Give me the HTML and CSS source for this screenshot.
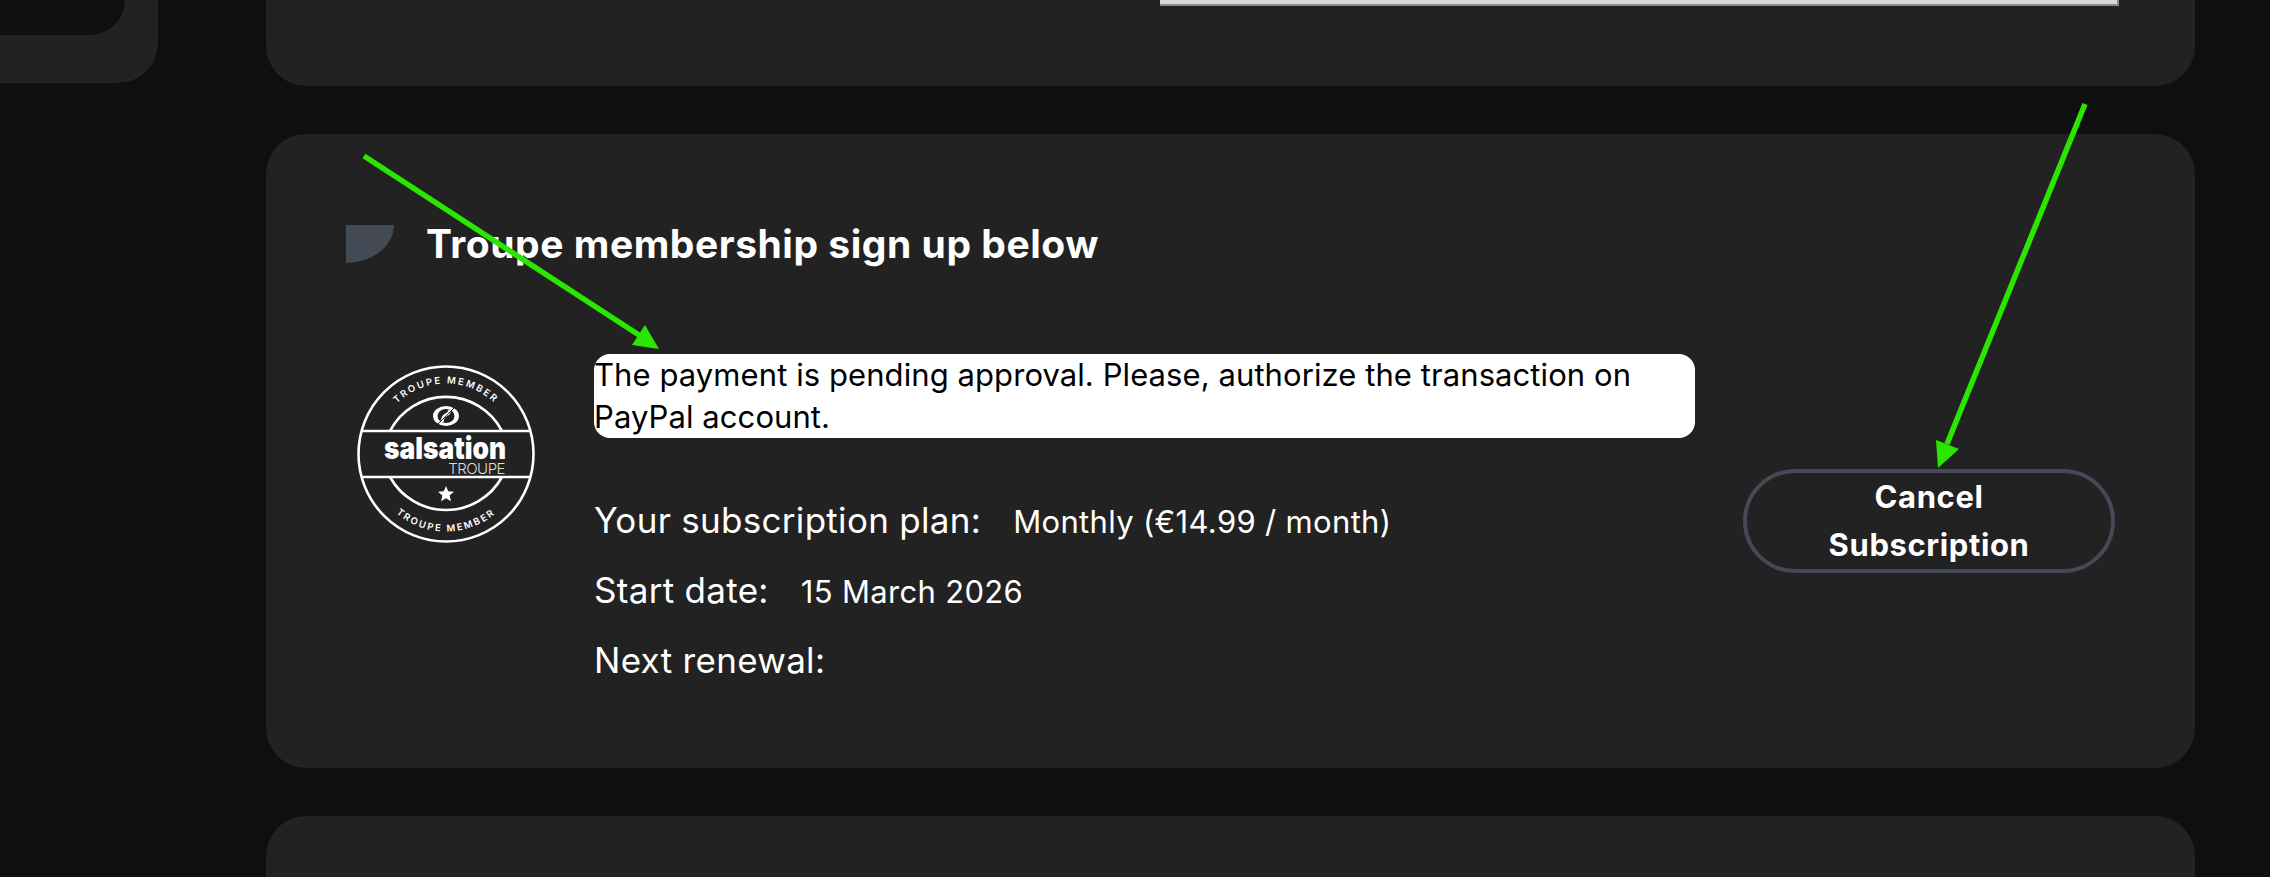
FILE: index.html
```html
<!DOCTYPE html>
<html lang="en">
<head>
<meta charset="utf-8">
<title>Troupe membership</title>
<link rel="stylesheet" href="styles.css">
</head>
<body>
<div class="page">
  <aside class="sidebar"><div class="sidebar-inner"></div></aside>
  <main class="content">
    <section class="card card-top"><div class="shot-bar"></div></section>
    <section class="card card-member">
      <h2 class="card-title"><span class="title-mark"></span><span class="title-text">Troupe membership sign up below</span></h2>
      <div class="member-body">
        <svg class="badge" viewBox="0 0 180 180" width="180" height="180" aria-label="Salsation Troupe member badge">
          <defs>
            <path id="arc-top" d="M19.5 90 A70.5 70.5 0 0 1 160.5 90"/>
            <path id="arc-bottom" d="M12.5 90 A77.5 77.5 0 0 0 167.5 90"/>
          </defs>
          <circle cx="90" cy="90" r="87.5" class="ring"/>
          <path class="ring" d="M34 67 A63 63 0 0 1 146 67 M34 113 A64 64 0 0 0 146 113"/>
          <path class="ring" d="M6 67 H174 M6 113 H174"/>
          <text class="arc-text"><textPath href="#arc-top" startOffset="50%" text-anchor="middle">TROUPE MEMBER</textPath></text>
          <text class="arc-text"><textPath href="#arc-bottom" startOffset="50%" text-anchor="middle">TROUPE MEMBER</textPath></text>
          <ellipse cx="90" cy="52" rx="13" ry="10" class="swirl"/>
          <ellipse cx="90" cy="52" rx="8.5" ry="7" class="swirl-hole"/>
          <path class="swirl-band" d="M86 58 Q87 52 90 51 Q93 50 94 46"/>
          <path class="swirl-cut" d="M80 62 L100 42"/>
          <text class="brand" x="89" y="95" text-anchor="middle" textLength="122" lengthAdjust="spacingAndGlyphs">salsation</text>
          <text class="brand-sub" x="149" y="110" text-anchor="end">TROUPE</text>
          <path class="star" d="M90 122 L92.2 127.3 L98 127.8 L93.6 131.6 L95 137.3 L90 134.3 L85 137.3 L86.4 131.6 L82 127.8 L87.8 127.3 Z"/>
        </svg>
        <div class="member-info">
          <p class="notice">The payment is pending approval. Please, authorize the transaction on PayPal account.</p>
          <div class="info-row"><span class="info-label">Your subscription plan:</span><span class="info-value">Monthly (€14.99 / month)</span></div>
          <div class="info-row"><span class="info-label">Start date:</span><span class="info-value">15 March 2026</span></div>
          <div class="info-row"><span class="info-label">Next renewal:</span></div>
        </div>
        <button class="cancel-btn" type="button">Cancel Subscription</button>
      </div>
    </section>
    <section class="card card-next"></section>
  </main>
</div>
<svg class="annotations" viewBox="0 0 2270 877" width="2270" height="877" aria-hidden="true">
  <path class="arrow-line" d="M364 156 L642 337"/>
  <path class="arrow-head" d="M659 349 L632 345 L645 325 Z"/>
  <path class="arrow-line" d="M2085 104 L1947 444"/>
  <path class="arrow-head" d="M1938 468 L1936 440 L1959 449 Z"/>
</svg>
</body>
</html>
```
FILE: styles.css
```css
* { box-sizing: border-box; }
html, body { margin: 0; height: 877px; overflow: hidden; background: #0f0f0f; }
body { font-family: "Inter", "Liberation Sans", sans-serif; color: #fff; position: relative; }
.page { display: flex; align-items: flex-start; width: 2270px; }
.sidebar { width: 158px; height: 83px; margin-right: 108px; background: #222; border-bottom-right-radius: 40px; flex: none; }
.sidebar-inner { width: 125px; height: 35px; background: #0f0f0f; border-bottom-right-radius: 45px; }
.content { width: 1929px; display: flex; flex-direction: column; gap: 48px; flex: none; }
.card { background: #222; border-radius: 40px; }
.card-top { height: 86px; border-top-left-radius: 0; border-top-right-radius: 0; padding-left: 894px; }
.shot-bar { width: 959px; height: 6px; background: #d9d9d9; border-bottom: 2px solid #8a8a8a; border-right: 2px solid #8a8a8a; }
.card-member { height: 634px; padding: 91px 80px 0; }
.card-next { height: 100px; border-bottom-left-radius: 0; border-bottom-right-radius: 0; }
.card-title { display: flex; align-items: flex-start; gap: 32px; margin: 0; height: 38px; }
.title-mark { width: 48px; height: 38px; background: #434a56; border-bottom-right-radius: 100%; flex: none; }
.title-text { font-size: 39px; font-weight: 700; line-height: 38px; letter-spacing: 0.54px; white-space: nowrap; }
.member-body { display: flex; align-items: flex-start; margin-top: 91px; }
.badge { flex: none; width: 180px; height: 180px; margin: 10px 58px 0 10px; }
.ring { fill: none; stroke: #fff; stroke-width: 2.6; }
.arc-text { fill: #fff; font-family: "Inter", sans-serif; font-size: 9.5px; font-weight: 600; letter-spacing: 2px; }
.swirl { fill: #fff; }
.swirl-hole { fill: #222; }
.swirl-band { stroke: #fff; stroke-width: 3; fill: none; }
.swirl-cut { stroke: #222; stroke-width: 1; fill: none; }
.brand { fill: #fff; font-family: "Inter", sans-serif; font-size: 30px; font-weight: 900; }
.brand-sub { fill: #ddd; font-family: "Inter", sans-serif; font-size: 15px; font-weight: 300; letter-spacing: -0.5px; }
.star { fill: #fff; }
.member-info { width: 1101px; flex: none; }
.notice { margin: 0 0 47px; background: #fff; color: #000; border-radius: 16px; font-size: 31px; line-height: 42px; letter-spacing: 0.08px; height: 84px; }
.info-row { display: flex; align-items: baseline; gap: 32px; height: 70px; line-height: 70px; }
.info-label { font-size: 35px; letter-spacing: 0.3px; }
.info-value { font-size: 31px; letter-spacing: 0.33px; }
.cancel-btn { flex: none; width: 372px; height: 104px; margin: 115px 0 0 48px; padding: 0 60px; background: transparent; color: #fff; border: 4px solid #434a56; border-radius: 52px; font: 700 31px/48px "Inter", sans-serif; letter-spacing: 0.6px; text-align: center; }
.annotations { position: absolute; left: 0; top: 0; pointer-events: none; }
.arrow-line { stroke: #2ae600; stroke-width: 5.5; fill: none; }
.arrow-head { fill: #2ae600; }
```
